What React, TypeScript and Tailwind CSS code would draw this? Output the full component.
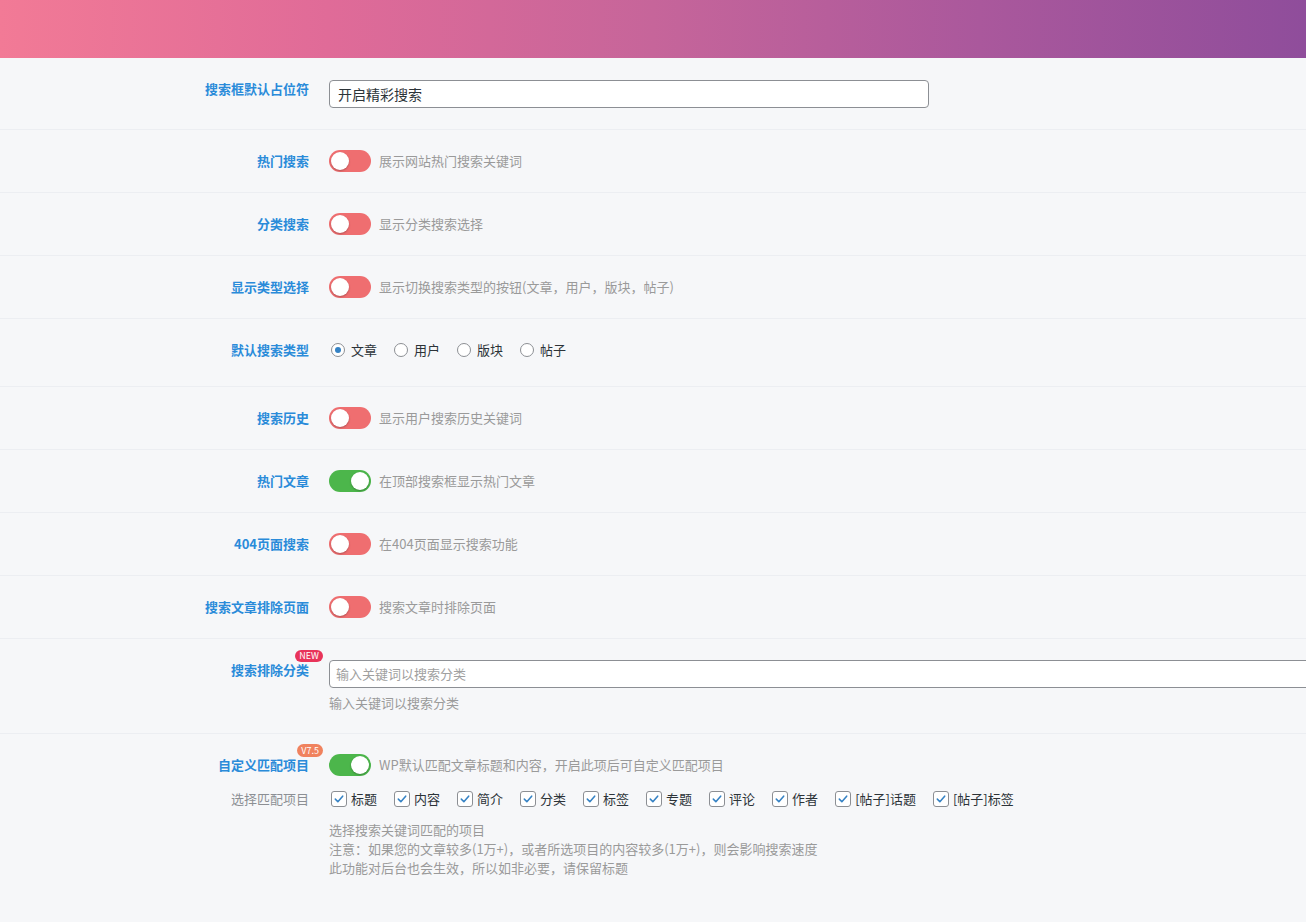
import React from "react";

const FONT = { fontFamily: '"Noto Sans CJK SC", "Noto Sans", sans-serif' };

function Toggle({ on = false }: { on?: boolean }) {
  return (
    <span
      className={`flex h-[22px] w-[42px] shrink-0 items-center rounded-full p-[2px] ${
        on ? "justify-end bg-[#4cb64b]" : "justify-start bg-[#ef6e70]"
      }`}
    >
      <span className="h-[18px] w-[18px] rounded-full bg-white shadow-[0_1px_2px_rgba(0,0,0,0.25)]" />
    </span>
  );
}

function Label({
  children,
  badge,
  muted = false,
}: {
  children: React.ReactNode;
  badge?: "new" | "v75";
  muted?: boolean;
}) {
  return (
    <div className="h-[22px] w-[329px] shrink-0 pr-5 text-right text-[13px] leading-[22px]">
      <span
        className={`relative inline-block align-top text-[13px] leading-[22px] ${
          muted ? "text-[#8c8f94]" : "font-bold text-[#2a8bd9]"
        }`}
      >
        {children}
        {badge === "new" && (
          <span className="absolute -top-[9px] -right-[14px] rounded-full bg-[#e8345a] px-[4px] text-[9px] font-normal leading-[12px] text-white">
            NEW
          </span>
        )}
        {badge === "v75" && (
          <span className="absolute -top-[10px] -right-[14px] rounded-full bg-[#f0825e] px-[4px] text-[9px] font-normal leading-[13px] text-white">
            V7.5
          </span>
        )}
      </span>
    </div>
  );
}

function ToggleRow({
  label,
  desc,
  on = false,
}: {
  label: string;
  desc: string;
  on?: boolean;
}) {
  return (
    <div className="flex border-b border-[#eceef2] py-5 leading-[22px]">
      <Label>{label}</Label>
      <div className="flex h-[22px] items-center gap-2">
        <Toggle on={on} />
        <span className="text-[13px] leading-[22px] text-[#9a9a9a]">{desc}</span>
      </div>
    </div>
  );
}

function Radio({ checked = false, text }: { checked?: boolean; text: string }) {
  return (
    <span className="flex h-[22px] items-center gap-[6px]">
      <span className="ml-[2px] flex h-[14px] w-[14px] items-center justify-center rounded-full border border-[#8c8f94] bg-white">
        {checked && <span className="h-[6px] w-[6px] rounded-full bg-[#3582c4]" />}
      </span>
      <span className="text-[13px] leading-[22px] text-[#2c3338]">{text}</span>
    </span>
  );
}

function Check({ text }: { text: string }) {
  return (
    <span className="flex h-[22px] items-center gap-[4px]">
      <span className="ml-[2px] flex h-[16px] w-[16px] items-center justify-center rounded-[3px] border border-[#8c8f94] bg-white">
        <svg viewBox="0 0 16 16" className="h-[14px] w-[14px]">
          <path
            d="M3.8 8.2 L6.7 11.1 L12.2 4.8"
            fill="none"
            stroke="#3582c4"
            strokeWidth="1.8"
            strokeLinecap="round"
            strokeLinejoin="round"
          />
        </svg>
      </span>
      <span className="text-[13px] leading-[22px] text-[#2c3338]">{text}</span>
    </span>
  );
}

export default function App() {
  const items = ["标题", "内容", "简介", "分类", "标签", "专题", "评论", "作者", "[帖子]话题", "[帖子]标签"];

  return (
    <div className="min-h-screen w-full overflow-hidden bg-[#f6f7f9]" style={FONT}>
      <div className="h-[58px] w-full bg-[linear-gradient(90deg,#f27a96_0%,#e06b98_25%,#c6659a_50%,#aa589c_75%,#8f4d9b_100%)]" />

      <div className="flex border-b border-[#eceef2] pb-[21px] pt-5 leading-[22px]">
        <Label>搜索框默认占位符</Label>
        <div className="mt-[2px] flex h-[28px] w-[600px] items-center rounded-[4px] border border-[#8c8f94] bg-white px-2 text-[14px] text-[#2c3338]">
          开启精彩搜索
        </div>
      </div>

      <ToggleRow label="热门搜索" desc="展示网站热门搜索关键词" />
      <ToggleRow label="分类搜索" desc="显示分类搜索选择" />
      <ToggleRow label="显示类型选择" desc="显示切换搜索类型的按钮(文章，用户，版块，帖子)" />

      <div className="flex border-b border-[#eceef2] pb-[25px] pt-5 leading-[22px]">
        <Label>默认搜索类型</Label>
        <div className="flex h-[22px] items-center gap-[15px]">
          <Radio checked text="文章" />
          <Radio text="用户" />
          <Radio text="版块" />
          <Radio text="帖子" />
        </div>
      </div>

      <ToggleRow label="搜索历史" desc="显示用户搜索历史关键词" />
      <ToggleRow label="热门文章" desc="在顶部搜索框显示热门文章" on />
      <ToggleRow label="404页面搜索" desc="在404页面显示搜索功能" />
      <ToggleRow label="搜索文章排除页面" desc="搜索文章时排除页面" />

      <div className="flex border-b border-[#eceef2] pb-5 pt-5 leading-[22px]">
        <Label badge="new">搜索排除分类</Label>
        <div className="flex flex-col">
          <div className="mt-[1px] flex h-[28px] w-[1000px] items-center rounded-[4px] border border-[#8c8f94] bg-white px-[6px] text-[13px] text-[#a0a0a0]">
            输入关键词以搜索分类
          </div>
          <div className="mt-[5px] text-[13px] leading-[20px] text-[#9a9a9a]">输入关键词以搜索分类</div>
        </div>
      </div>

      <div className="flex flex-col pb-5 pt-5 leading-[22px]">
        <div className="flex">
          <Label badge="v75">自定义匹配项目</Label>
          <div className="flex h-[22px] items-center gap-2">
            <Toggle on />
            <span className="text-[13px] leading-[22px] text-[#9a9a9a]">
              WP默认匹配文章标题和内容，开启此项后可自定义匹配项目
            </span>
          </div>
        </div>
        <div className="mt-3 flex">
          <Label muted>选择匹配项目</Label>
          <div className="flex h-[22px] items-center gap-[15px]">
            {items.map((t) => (
              <Check key={t} text={t} />
            ))}
          </div>
        </div>
        <div className="mt-[10px] pl-[329px] text-[13px] leading-[19px] text-[#9a9a9a]">
          <div>选择搜索关键词匹配的项目</div>
          <div>注意：如果您的文章较多(1万+)，或者所选项目的内容较多(1万+)，则会影响搜索速度</div>
          <div>此功能对后台也会生效，所以如非必要，请保留标题</div>
        </div>
      </div>
    </div>
  );
}
